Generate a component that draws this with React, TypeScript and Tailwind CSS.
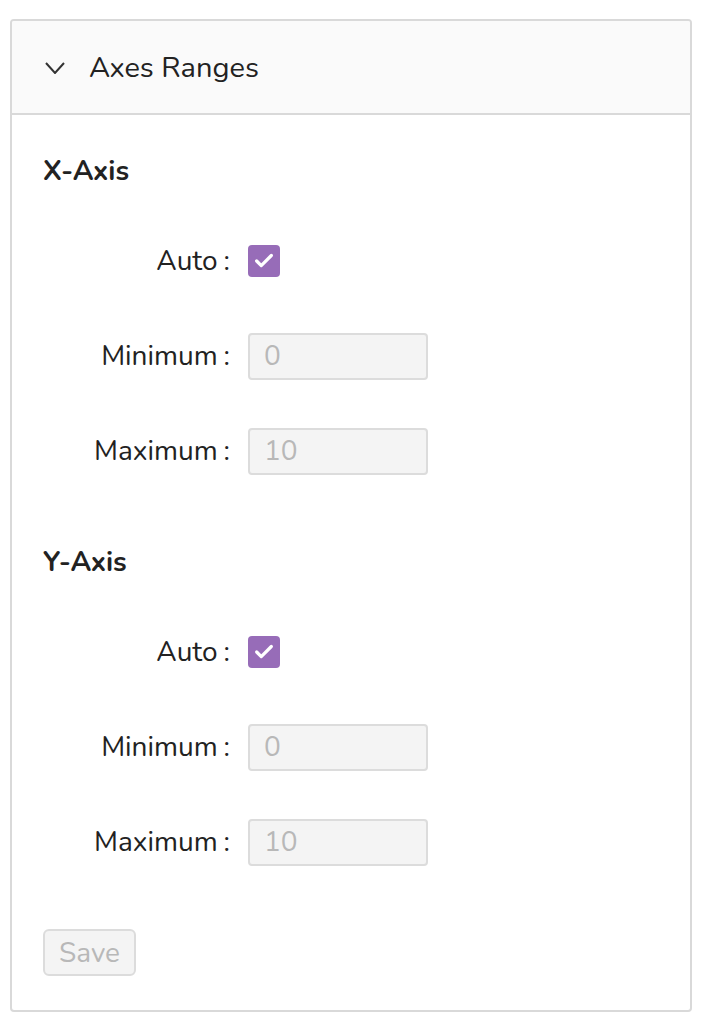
import { Check } from "lucide-react";

const font = { fontFamily: '"Nunito", "Noto Sans", "Lato", sans-serif' };

function Row({ label, children }: { label: string; children: React.ReactNode }) {
  return (
    <div className="flex h-[48px] items-center">
      <div className="flex w-[187px] justify-end text-[28px] text-[#222]">
        <span>{label}</span>
        <span className="ml-[6px]">:</span>
      </div>
      <div className="ml-[18px] flex items-center">{children}</div>
    </div>
  );
}

function NumberBox({ value }: { value: string }) {
  return (
    <input
      disabled
      value={value}
      className="h-[47px] w-[180px] rounded-[4px] border-2 border-[#dcdcdc] bg-[#f4f4f4] px-[14px] text-[28px] text-[#b8b8b8]"
      style={font}
      readOnly
    />
  );
}

function AutoBox() {
  return (
    <div className="flex h-[32px] w-[32px] items-center justify-center rounded-[4px] bg-[#976cb8]">
      <Check size={22} strokeWidth={3.5} color="#fff" />
    </div>
  );
}

function AxisSection({ title }: { title: string }) {
  return (
    <div>
      <h2 className="h-[36px] text-[28px] font-bold leading-[36px] text-[#222]">{title}</h2>
      <div className="mt-[48px] flex flex-col gap-[47px]">
        <Row label="Auto">
          <AutoBox />
        </Row>
        <Row label="Minimum">
          <NumberBox value="0" />
        </Row>
        <Row label="Maximum">
          <NumberBox value="10" />
        </Row>
      </div>
    </div>
  );
}

export default function App() {
  return (
    <div className="min-h-screen bg-white pl-[10px] pt-[19px]" style={font}>
      <div className="w-[682px] overflow-hidden rounded-[4px] border-2 border-[#d9d9d9]">
        <div className="flex h-[94px] items-center border-b-2 border-[#d9d9d9] bg-[#fafafa] pl-[33px] pt-[2px]">
          <svg width="20" height="12" viewBox="0 0 20 12" fill="none">
            <path d="M1 1 L10 11 L19 1" stroke="#333" strokeWidth="2" />
          </svg>
          <span className="ml-[24px] text-[29px] text-[#222]">Axes Ranges</span>
        </div>
        <div className="px-[31px] pb-[34px] pt-[38px]">
          <AxisSection title="X-Axis" />
          <div className="mt-[69px]">
            <AxisSection title="Y-Axis" />
          </div>
          <button
            disabled
            className="mt-[63px] flex h-[47px] w-[93px] items-center justify-center rounded-[6px] border-2 border-[#dcdcdc] bg-[#f4f4f4] text-[28px] text-[#b8b8b8]"
            style={font}
          >
            Save
          </button>
        </div>
      </div>
    </div>
  );
}
